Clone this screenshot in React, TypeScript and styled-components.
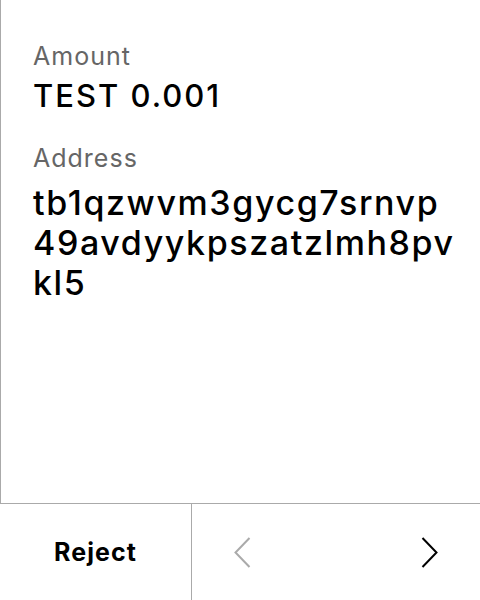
import React from "react";
import styled, { createGlobalStyle } from "styled-components";

const Global = createGlobalStyle`
  html, body { margin: 0; padding: 0; background: #fff; }
  body { font-family: Inter, "Noto Sans", sans-serif; color: #000; }
`;

const Screen = styled.div`
  width: 480px;
  height: 600px;
  display: flex;
  flex-direction: column;
  background: #fff;
`;

const Content = styled.div`
  height: 504px;
  box-sizing: border-box;
  border-left: 1px solid #aaa;
  border-bottom: 1px solid #aaa;
  padding: 40px 0 0 32px;
  display: flex;
  flex-direction: column;
`;

const Label = styled.div<{ $gap?: number }>`
  font-size: 25px;
  line-height: 32px;
  letter-spacing: 1px;
  color: #666;
  margin-top: ${(p) => p.$gap ?? 0}px;
`;

const Value = styled.div<{ $size: number; $lh: number; $gap: number; $ls: number }>`
  font-size: ${(p) => p.$size}px;
  line-height: ${(p) => p.$lh}px;
  letter-spacing: ${(p) => p.$ls}px;
  margin-top: ${(p) => p.$gap}px;
  font-weight: 500;
  color: #000;
  white-space: nowrap;
`;

const Footer = styled.div`
  flex: 1;
  display: flex;
`;

const RejectButton = styled.button`
  width: 192px;
  border: none;
  border-right: 1px solid #aaa;
  background: none;
  font-family: inherit;
  font-size: 25px;
  font-weight: 700;
  letter-spacing: 1.1px;
  color: #000;
  padding: 0;
`;

const Nav = styled.div`
  flex: 1;
  display: flex;
  align-items: center;
  justify-content: space-between;
  padding: 0 42px;
`;

const NavButton = styled.button<{ $disabled?: boolean }>`
  border: none;
  background: none;
  padding: 0;
  display: flex;
  color: ${(p) => (p.$disabled ? "#aaa" : "#000")};
`;

const Chevron = ({ dir }: { dir: "left" | "right" }) => (
  <svg width="17" height="31" viewBox="0 0 17 31" fill="none">
    <path
      d={dir === "left" ? "M15.5 1 L1.5 15.5 L15.5 30" : "M1.5 1 L15.5 15.5 L1.5 30"}
      stroke="currentColor"
      strokeWidth="2"
    />
  </svg>
);

const addressLines = ["tb1qzwvm3gycg7srnvp", "49avdyykpszatzlmh8pv", "kl5"];

export default function App() {
  return (
    <>
      <Global />
      <Screen>
        <Content>
          <Label>Amount</Label>
          <Value $size={31} $lh={36} $gap={6} $ls={2}>TEST 0.001</Value>
          <Label $gap={28}>Address</Label>
          {addressLines.map((line, i) => (
            <Value key={line} $size={34} $lh={40} $gap={i === 0 ? 9 : 0} $ls={1.6}>
              {line}
            </Value>
          ))}
        </Content>
        <Footer>
          <RejectButton>Reject</RejectButton>
          <Nav>
            <NavButton $disabled>
              <Chevron dir="left" />
            </NavButton>
            <NavButton>
              <Chevron dir="right" />
            </NavButton>
          </Nav>
        </Footer>
      </Screen>
    </>
  );
}
